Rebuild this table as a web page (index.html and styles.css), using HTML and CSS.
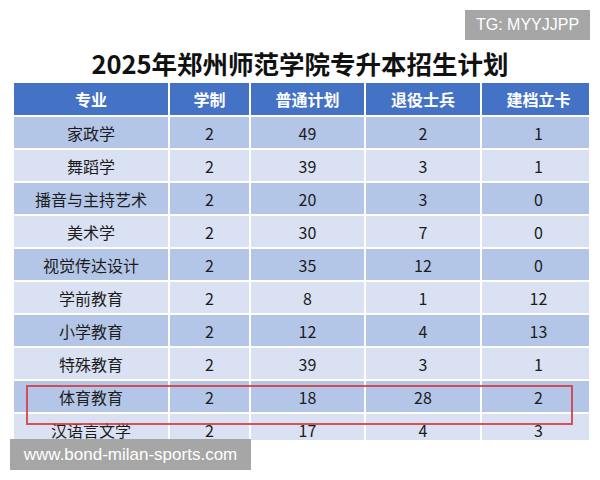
FILE: index.html
```html
<!DOCTYPE html>
<html lang="zh">
<head>
<meta charset="utf-8">
<link rel="stylesheet" href="styles.css">
</head>
<body>
<div class="page">
  <h1 class="title">2025年郑州师范学院专升本招生计划</h1>
  <div class="table-wrap">
    <table class="plan">
      <thead>
        <tr><th class="c1">专业</th><th class="c2">学制</th><th class="c3">普通计划</th><th class="c4">退役士兵</th><th class="c5">建档立卡</th></tr>
      </thead>
      <tbody>
        <tr><td>家政学</td><td>2</td><td>49</td><td>2</td><td>1</td></tr>
        <tr><td>舞蹈学</td><td>2</td><td>39</td><td>3</td><td>1</td></tr>
        <tr><td>播音与主持艺术</td><td>2</td><td>20</td><td>3</td><td>0</td></tr>
        <tr><td>美术学</td><td>2</td><td>30</td><td>7</td><td>0</td></tr>
        <tr><td>视觉传达设计</td><td>2</td><td>35</td><td>12</td><td>0</td></tr>
        <tr><td>学前教育</td><td>2</td><td>8</td><td>1</td><td>12</td></tr>
        <tr><td>小学教育</td><td>2</td><td>12</td><td>4</td><td>13</td></tr>
        <tr><td>特殊教育</td><td>2</td><td>39</td><td>3</td><td>1</td></tr>
        <tr><td>体育教育</td><td>2</td><td>18</td><td>28</td><td>2</td></tr>
        <tr><td>汉语言文学</td><td>2</td><td>17</td><td>4</td><td>3</td></tr>
      </tbody>
    </table>
  </div>
  <div class="highlight"></div>
  <div class="badge">TG: MYYJJPP</div>
  <div class="watermark">www.bond-milan-sports.com</div>
</div>
</body>
</html>
```

FILE: styles.css
```css
* { box-sizing: border-box; }
html, body { margin: 0; padding: 0; background: #fff; }
body {
  width: 600px;
  height: 480px;
  overflow: hidden;
  font-family: "Noto Sans CJK SC", "Noto Sans", sans-serif;
}
.page {
  position: relative;
  width: 600px;
  height: 480px;
  padding-top: 47px;
}
.title {
  margin: 0;
  height: 36px;
  line-height: 31px;
  text-align: center;
  font-size: 25.5px;
  font-weight: 700;
  color: #111;
  letter-spacing: 0;
}
.table-wrap {
  margin-left: 12px;
  width: 577px;
  height: 357px;
  overflow: hidden;
}
.plan {
  border-collapse: separate;
  border-spacing: 2px;
  width: 577px;
  table-layout: fixed;
  margin-top: -2px;
}
.plan th, .plan td {
  padding: 0;
  text-align: center;
  vertical-align: middle;
}
.plan th {
  height: 32px;
  background: #4472c4;
  color: #fff;
  font-size: 16px;
  font-weight: 700;
}
.plan td {
  height: 31px;
  font-size: 16px;
  color: #1c1c1c;
}
.plan tbody tr:nth-child(odd) td { background: #b4c6e7; }
.plan tbody tr:nth-child(even) td { background: #d9e1f2; }
.c1 { width: 154px; }
.c2 { width: 79px; }
.c3 { width: 113px; }
.c4 { width: 114px; }
.c5 { width: 113px; }
.highlight {
  position: absolute;
  left: 26px;
  top: 385px;
  width: 547px;
  height: 40px;
  border: 2px solid rgba(215, 55, 60, 0.85);
}
.badge {
  position: absolute;
  left: 465px;
  top: 10px;
  width: 125px;
  height: 30px;
  background: #a6a6a6;
  color: #fff;
  font-family: "Liberation Sans", Arial, sans-serif;
  font-size: 16px;
  line-height: 30px;
  text-align: center;
}
.watermark {
  position: absolute;
  left: 10px;
  top: 439px;
  width: 241px;
  height: 31px;
  background: #a6a6a6;
  color: #fff;
  font-family: "Liberation Sans", Arial, sans-serif;
  font-size: 17px;
  line-height: 31px;
  text-align: center;
}
```
